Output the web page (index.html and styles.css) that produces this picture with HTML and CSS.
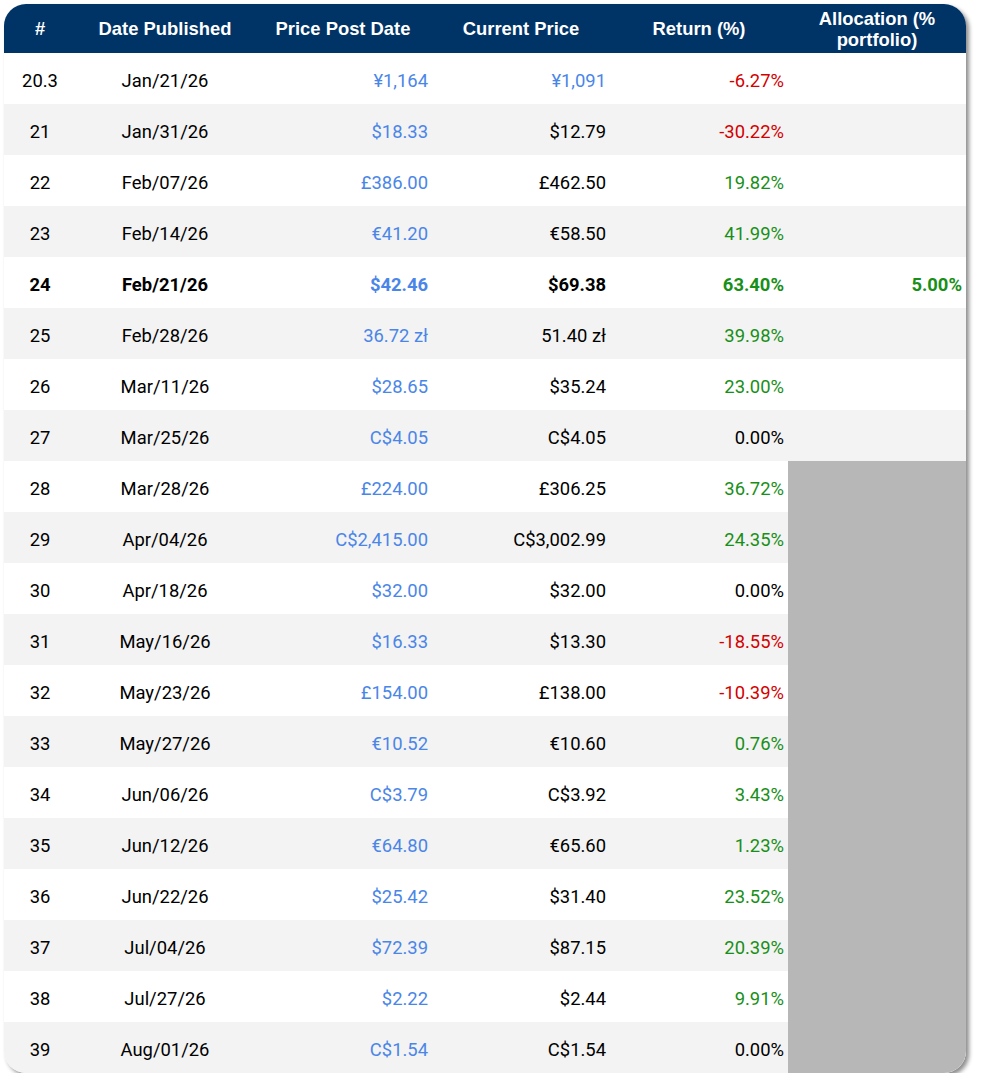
FILE: index.html
```html
<!DOCTYPE html>
<html>
<head>
<meta charset="utf-8">
<link rel="stylesheet" href="styles.css">
</head>
<body>
<div class="card">
  <div class="row head">
    <div class="c">#</div>
    <div class="c">Date Published</div>
    <div class="c">Price Post Date</div>
    <div class="c">Current Price</div>
    <div class="c">Return (%)</div>
    <div class="c two">Allocation (%<br>portfolio)</div>
  </div>
  <div class="row"><div class="c">20.3</div><div class="c">Jan/21/26</div><div class="r blue">¥1,164</div><div class="r blue">¥1,091</div><div class="r red">-6.27%</div><div class="r"></div></div>
  <div class="row alt"><div class="c">21</div><div class="c">Jan/31/26</div><div class="r blue">$18.33</div><div class="r">$12.79</div><div class="r red">-30.22%</div><div class="r"></div></div>
  <div class="row"><div class="c">22</div><div class="c">Feb/07/26</div><div class="r blue">£386.00</div><div class="r">£462.50</div><div class="r green">19.82%</div><div class="r"></div></div>
  <div class="row alt"><div class="c">23</div><div class="c">Feb/14/26</div><div class="r blue">€41.20</div><div class="r">€58.50</div><div class="r green">41.99%</div><div class="r"></div></div>
  <div class="row bold"><div class="c">24</div><div class="c">Feb/21/26</div><div class="r blue">$42.46</div><div class="r">$69.38</div><div class="r green">63.40%</div><div class="r green">5.00%</div></div>
  <div class="row alt"><div class="c">25</div><div class="c">Feb/28/26</div><div class="r blue">36.72 zł</div><div class="r">51.40 zł</div><div class="r green">39.98%</div><div class="r"></div></div>
  <div class="row"><div class="c">26</div><div class="c">Mar/11/26</div><div class="r blue">$28.65</div><div class="r">$35.24</div><div class="r green">23.00%</div><div class="r"></div></div>
  <div class="row alt"><div class="c">27</div><div class="c">Mar/25/26</div><div class="r blue">C$4.05</div><div class="r">C$4.05</div><div class="r">0.00%</div><div class="r"></div></div>
  <div class="row"><div class="c">28</div><div class="c">Mar/28/26</div><div class="r blue">£224.00</div><div class="r">£306.25</div><div class="r green">36.72%</div><div class="r na"></div></div>
  <div class="row alt"><div class="c">29</div><div class="c">Apr/04/26</div><div class="r blue">C$2,415.00</div><div class="r">C$3,002.99</div><div class="r green">24.35%</div><div class="r na"></div></div>
  <div class="row"><div class="c">30</div><div class="c">Apr/18/26</div><div class="r blue">$32.00</div><div class="r">$32.00</div><div class="r">0.00%</div><div class="r na"></div></div>
  <div class="row alt"><div class="c">31</div><div class="c">May/16/26</div><div class="r blue">$16.33</div><div class="r">$13.30</div><div class="r red">-18.55%</div><div class="r na"></div></div>
  <div class="row"><div class="c">32</div><div class="c">May/23/26</div><div class="r blue">£154.00</div><div class="r">£138.00</div><div class="r red">-10.39%</div><div class="r na"></div></div>
  <div class="row alt"><div class="c">33</div><div class="c">May/27/26</div><div class="r blue">€10.52</div><div class="r">€10.60</div><div class="r green">0.76%</div><div class="r na"></div></div>
  <div class="row"><div class="c">34</div><div class="c">Jun/06/26</div><div class="r blue">C$3.79</div><div class="r">C$3.92</div><div class="r green">3.43%</div><div class="r na"></div></div>
  <div class="row alt"><div class="c">35</div><div class="c">Jun/12/26</div><div class="r blue">€64.80</div><div class="r">€65.60</div><div class="r green">1.23%</div><div class="r na"></div></div>
  <div class="row"><div class="c">36</div><div class="c">Jun/22/26</div><div class="r blue">$25.42</div><div class="r">$31.40</div><div class="r green">23.52%</div><div class="r na"></div></div>
  <div class="row alt"><div class="c">37</div><div class="c">Jul/04/26</div><div class="r blue">$72.39</div><div class="r">$87.15</div><div class="r green">20.39%</div><div class="r na"></div></div>
  <div class="row"><div class="c">38</div><div class="c">Jul/27/26</div><div class="r blue">$2.22</div><div class="r">$2.44</div><div class="r green">9.91%</div><div class="r na"></div></div>
  <div class="row alt"><div class="c">39</div><div class="c">Aug/01/26</div><div class="r blue">C$1.54</div><div class="r">C$1.54</div><div class="r">0.00%</div><div class="r na"></div></div>
</div>
</body>
</html>
```
FILE: styles.css
```css
html, body {
  margin: 0;
  padding: 0;
  background: #ffffff;
}
body {
  padding: 4px 0 0 4px;
}
.card {
  width: 962px;
  border-radius: 22px;
  overflow: hidden;
  background: #ffffff;
  box-shadow: 3px 3px 4px rgba(0, 0, 0, 0.45);
  font-family: Roboto, "Liberation Sans", sans-serif;
  font-size: 18.4px;
  color: #000000;
}
.row {
  display: grid;
  grid-template-columns: 72px repeat(5, 178px);
  height: 51px;
  background: #ffffff;
}
.row.alt {
  background: #f3f3f3;
}
.row > div {
  display: flex;
  align-items: center;
  height: 100%;
  box-sizing: border-box;
  white-space: nowrap;
  padding-top: 4px;
}
.c {
  justify-content: center;
  text-align: center;
}
.r {
  justify-content: flex-end;
  padding-right: 4px;
}
.head {
  height: 49px;
  background: #003366;
  color: #ffffff;
  font-family: "Liberation Sans", Arial, sans-serif;
  font-weight: bold;
  font-size: 18.4px;
}
.head > div {
  padding-top: 0;
}
.head .two {
  line-height: 21px;
  white-space: normal;
}
.bold {
  font-weight: bold;
}
.blue {
  color: #4a86e8;
}
.red {
  color: #d40000;
}
.green {
  color: #188f18;
}
.na {
  background: #b7b7b7;
}
```
